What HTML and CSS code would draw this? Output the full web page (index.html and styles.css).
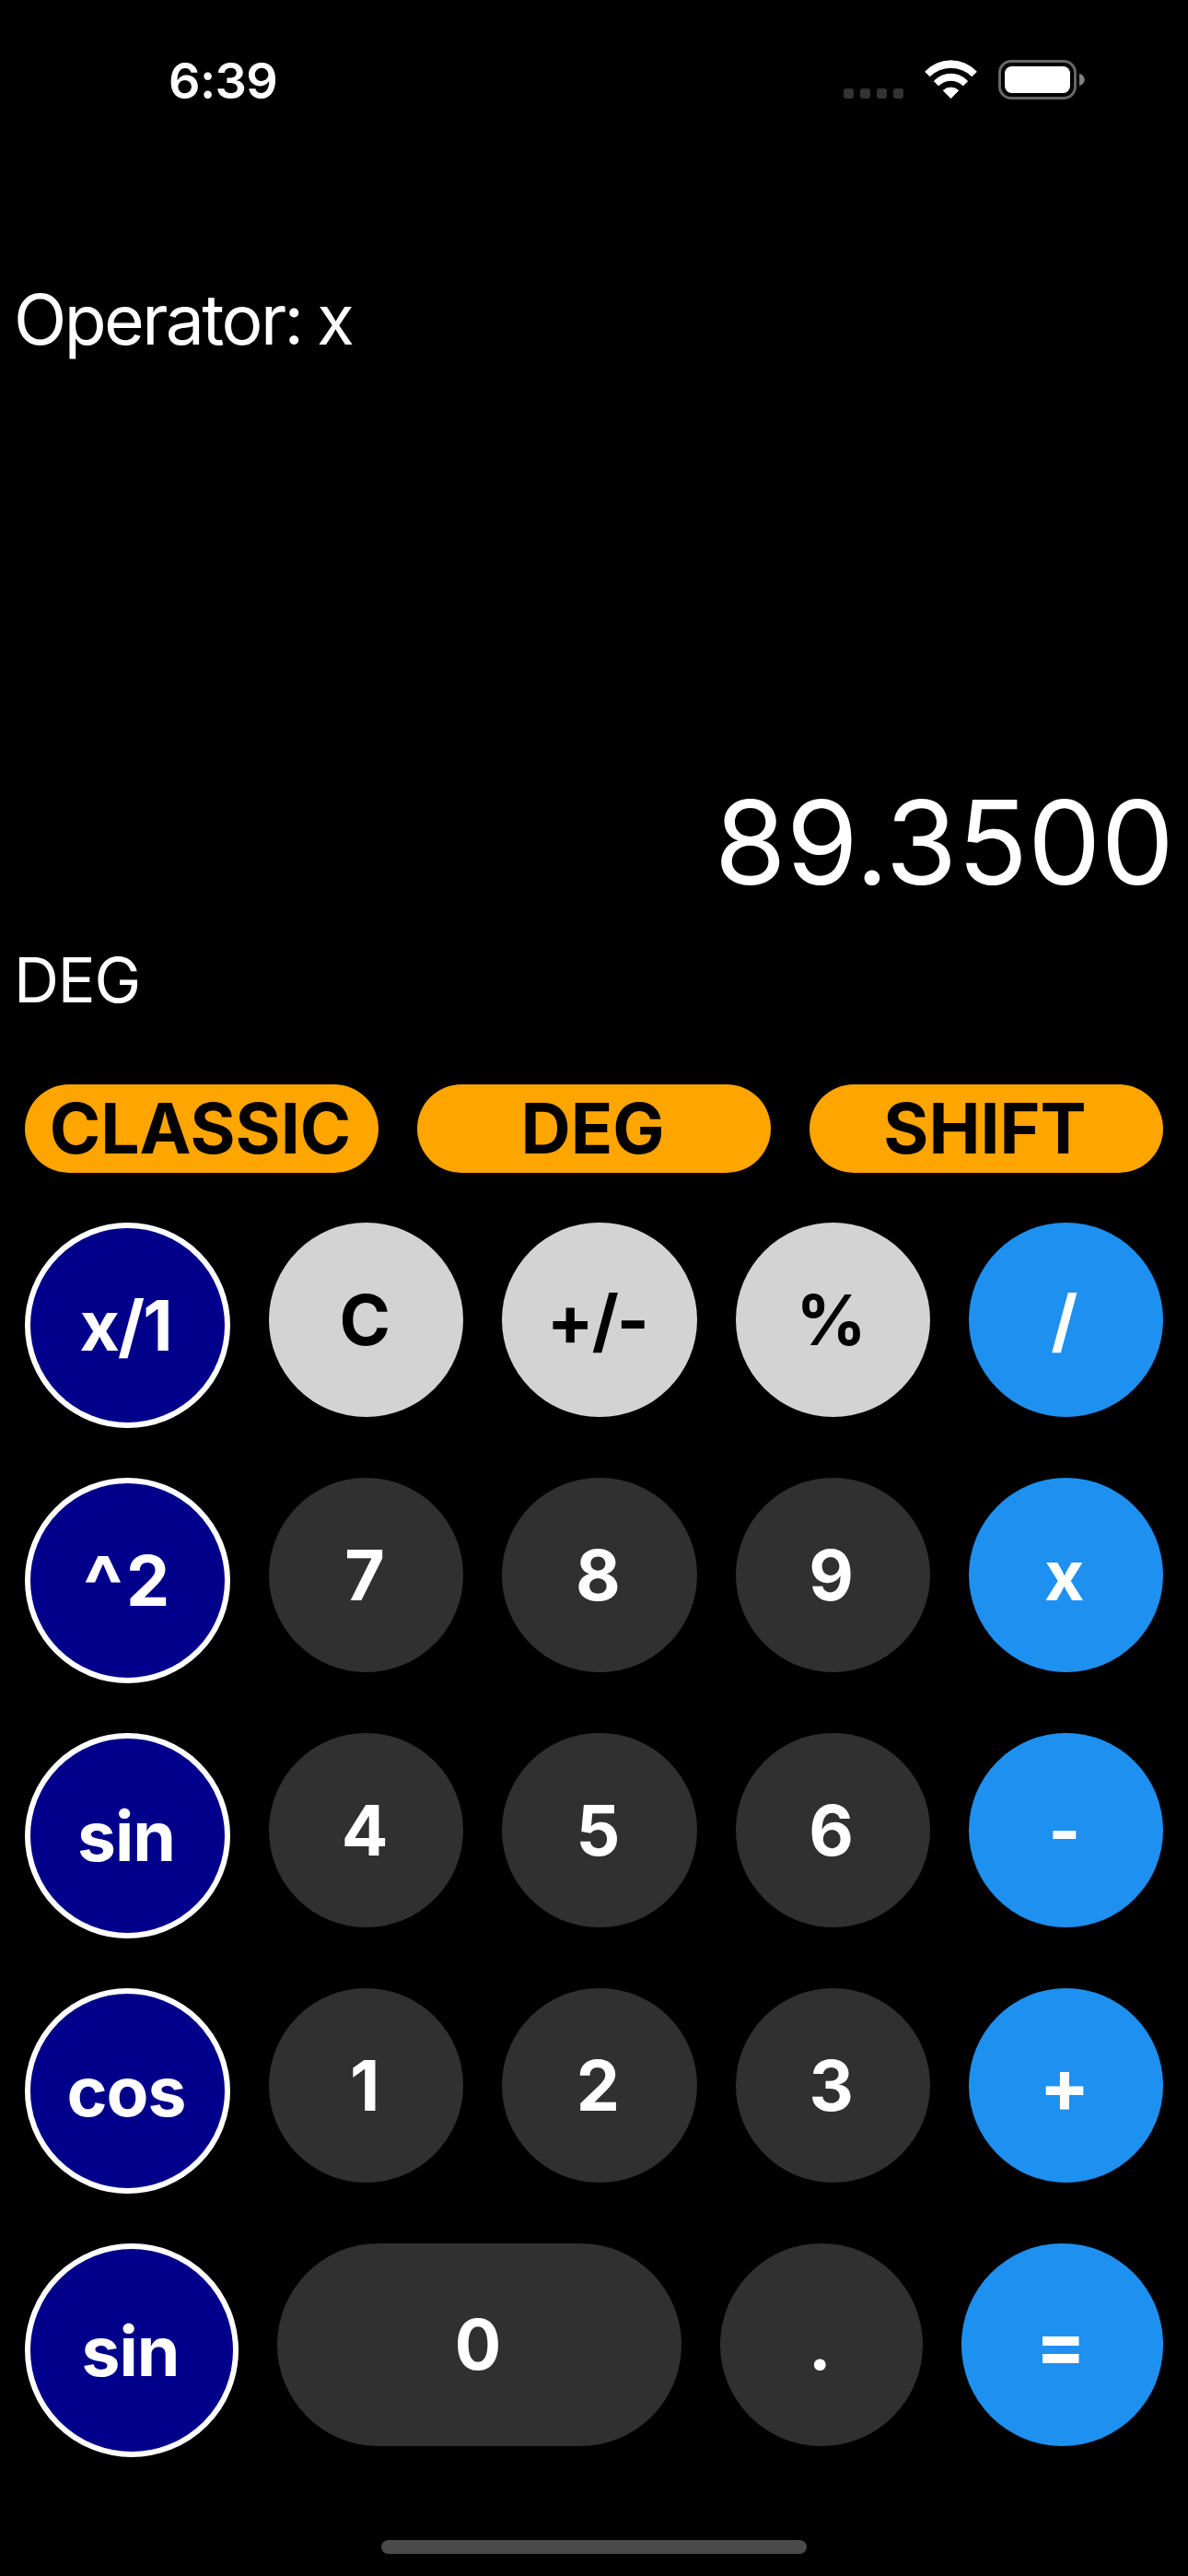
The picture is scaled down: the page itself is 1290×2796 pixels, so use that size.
FILE: index.html
```html
<!DOCTYPE html>
<html lang="en">
<head>
<meta charset="utf-8">
<title>Calculator</title>
<link rel="stylesheet" href="styles.css">
</head>
<body>
<div class="screen">
  <header class="status">
    <div class="time">6:39</div>
    <div class="indicators">
      <svg class="signal" width="65" height="43" viewBox="0 0 65 43">
        <rect x="0" y="31" width="11" height="11" rx="3"/>
        <rect x="18" y="31" width="11" height="11" rx="3"/>
        <rect x="36" y="31" width="11" height="11" rx="3"/>
        <rect x="54" y="31" width="11" height="11" rx="3"/>
      </svg>
      <svg class="wifi" width="57" height="43" viewBox="0 0 57 43">
        <path d="M.6 12.8A38.6 38.6 0 0 1 56.4 12.8L51.4 17.8A32.6 32.6 0 0 0 5.6 17.8Z"/>
        <path d="M10.4 23A25 25 0 0 1 46.6 23L41.8 27.9A18.6 18.6 0 0 0 15.2 27.9Z"/>
        <path d="M20.3 33.2A12.4 12.4 0 0 1 36.7 33.2L28.5 41.6Z"/>
      </svg>
      <svg class="battery" width="94" height="43" viewBox="0 0 94 43">
        <rect class="shell" x="1.5" y="1.5" width="82" height="40" rx="12.5"/>
        <rect class="charge" x="7" y="7" width="71" height="29" rx="7.5"/>
        <path class="nub" d="M88 15C92 16 93.7 19 93.7 21.5C93.7 24 92 27 88 28Z"/>
      </svg>
    </div>
  </header>

  <section class="display">
    <div class="operator">Operator: x</div>
    <div class="value">89.3500</div>
    <div class="angle">DEG</div>
  </section>

  <nav class="modes">
    <button class="mode">CLASSIC</button>
    <button class="mode">DEG</button>
    <button class="mode">SHIFT</button>
  </nav>

  <main class="pad">
    <div class="row">
      <button class="key fn"><span class="tight">x/1</span></button>
      <button class="key util">C</button>
      <button class="key util"><span class="tight">+/-</span></button>
      <button class="key util">%</button>
      <button class="key op">/</button>
    </div>
    <div class="row">
      <button class="key fn"><span><span class="caret">^</span>2</span></button>
      <button class="key">7</button>
      <button class="key">8</button>
      <button class="key">9</button>
      <button class="key op">x</button>
    </div>
    <div class="row">
      <button class="key fn"><span class="snug">sin</span></button>
      <button class="key">4</button>
      <button class="key">5</button>
      <button class="key">6</button>
      <button class="key op">-</button>
    </div>
    <div class="row">
      <button class="key fn"><span class="snug">cos</span></button>
      <button class="key">1</button>
      <button class="key">2</button>
      <button class="key">3</button>
      <button class="key op"><span class="sign">+</span></button>
    </div>
    <div class="row last">
      <button class="key fn"><span class="snug">sin</span></button>
      <button class="key zero">0</button>
      <button class="key">.</button>
      <button class="key op"><span class="sign">=</span></button>
    </div>
  </main>

  <div class="home"></div>
</div>
</body>
</html>
```
FILE: styles.css
```css
* { box-sizing: border-box; }

body {
  margin: 0;
  background: #000;
  color: #fff;
  font-family: Inter, "Liberation Sans", sans-serif;
}

.screen {
  width: 1290px;
  height: 2796px;
  display: flex;
  flex-direction: column;
  overflow: hidden;
}

.status {
  height: 176px;
  padding: 0 112px 0 183px;
  display: flex;
  justify-content: space-between;
  align-items: center;
}

.time {
  font-size: 54px;
  font-weight: 600;
  line-height: 66px;
  letter-spacing: -0.6px;
}

.indicators {
  display: flex;
  margin-top: -3px;
}

.signal { fill: #333; margin-right: 23px; }
.wifi { fill: #fff; stroke: #fff; stroke-width: 1; stroke-linejoin: round; margin-right: 23px; }
.shell { fill: none; stroke: #666; stroke-width: 3; }
.charge { fill: #fff; }
.nub { fill: #808080; }

.display {
  display: flex;
  flex-direction: column;
  padding: 126px 15px 0;
}

.operator {
  font-size: 75px;
  line-height: 90px;
  letter-spacing: -2.6px;
  word-spacing: -2px;
}

.value {
  margin-top: 447px;
  font-size: 126px;
  line-height: 150px;
  text-align: right;
}

.angle {
  margin-top: 33px;
  font-size: 68px;
  line-height: 82px;
  letter-spacing: -1.2px;
}

button {
  border: 0;
  padding: 0 3px 0 0;
  font: 700 75px/90px Inter, "Liberation Sans", sans-serif;
  display: flex;
  justify-content: center;
  align-items: center;
}

.modes {
  margin-top: 73px;
  padding: 0 27px;
  display: grid;
  grid-template-columns: repeat(3, 1fr);
  gap: 42px;
}

.mode {
  height: 96px;
  border-radius: 48px;
  background: #ffa500;
  color: #000;
}

.pad {
  margin-top: 54px;
  padding: 0 27px;
}

.row {
  height: 277px;
  display: flex;
  align-items: flex-start;
  gap: 42px;
}

.key {
  flex: 1 1 0;
  height: 211px;
  border-radius: 112px;
  background: #303030;
  color: #fff;
}

.fn {
  flex: 0 0 223px;
  height: 223px;
  padding-top: 1px;
  border: 6px solid #fff;
  background: #00008b;
}

.util {
  background: #d3d3d3;
  color: #000;
}

.op { background: #1e90f0; }

.last { height: 232px; }
.last .key { height: 220px; }
.last .fn { flex-basis: 232px; height: 232px; border-radius: 116px; }
.last .zero { flex: 0 0 439px; }

.tight { letter-spacing: -2px; margin-right: 2px; }
.snug { letter-spacing: -1px; }
.caret {
  font-size: 91px;
  line-height: 0;
  letter-spacing: 3px;
  vertical-align: -11px;
}
.sign { font-size: 81px; }

.home {
  width: 462px;
  height: 15px;
  margin: 90px auto 0;
  border-radius: 8px;
  background: #4b4b4b;
}
```
